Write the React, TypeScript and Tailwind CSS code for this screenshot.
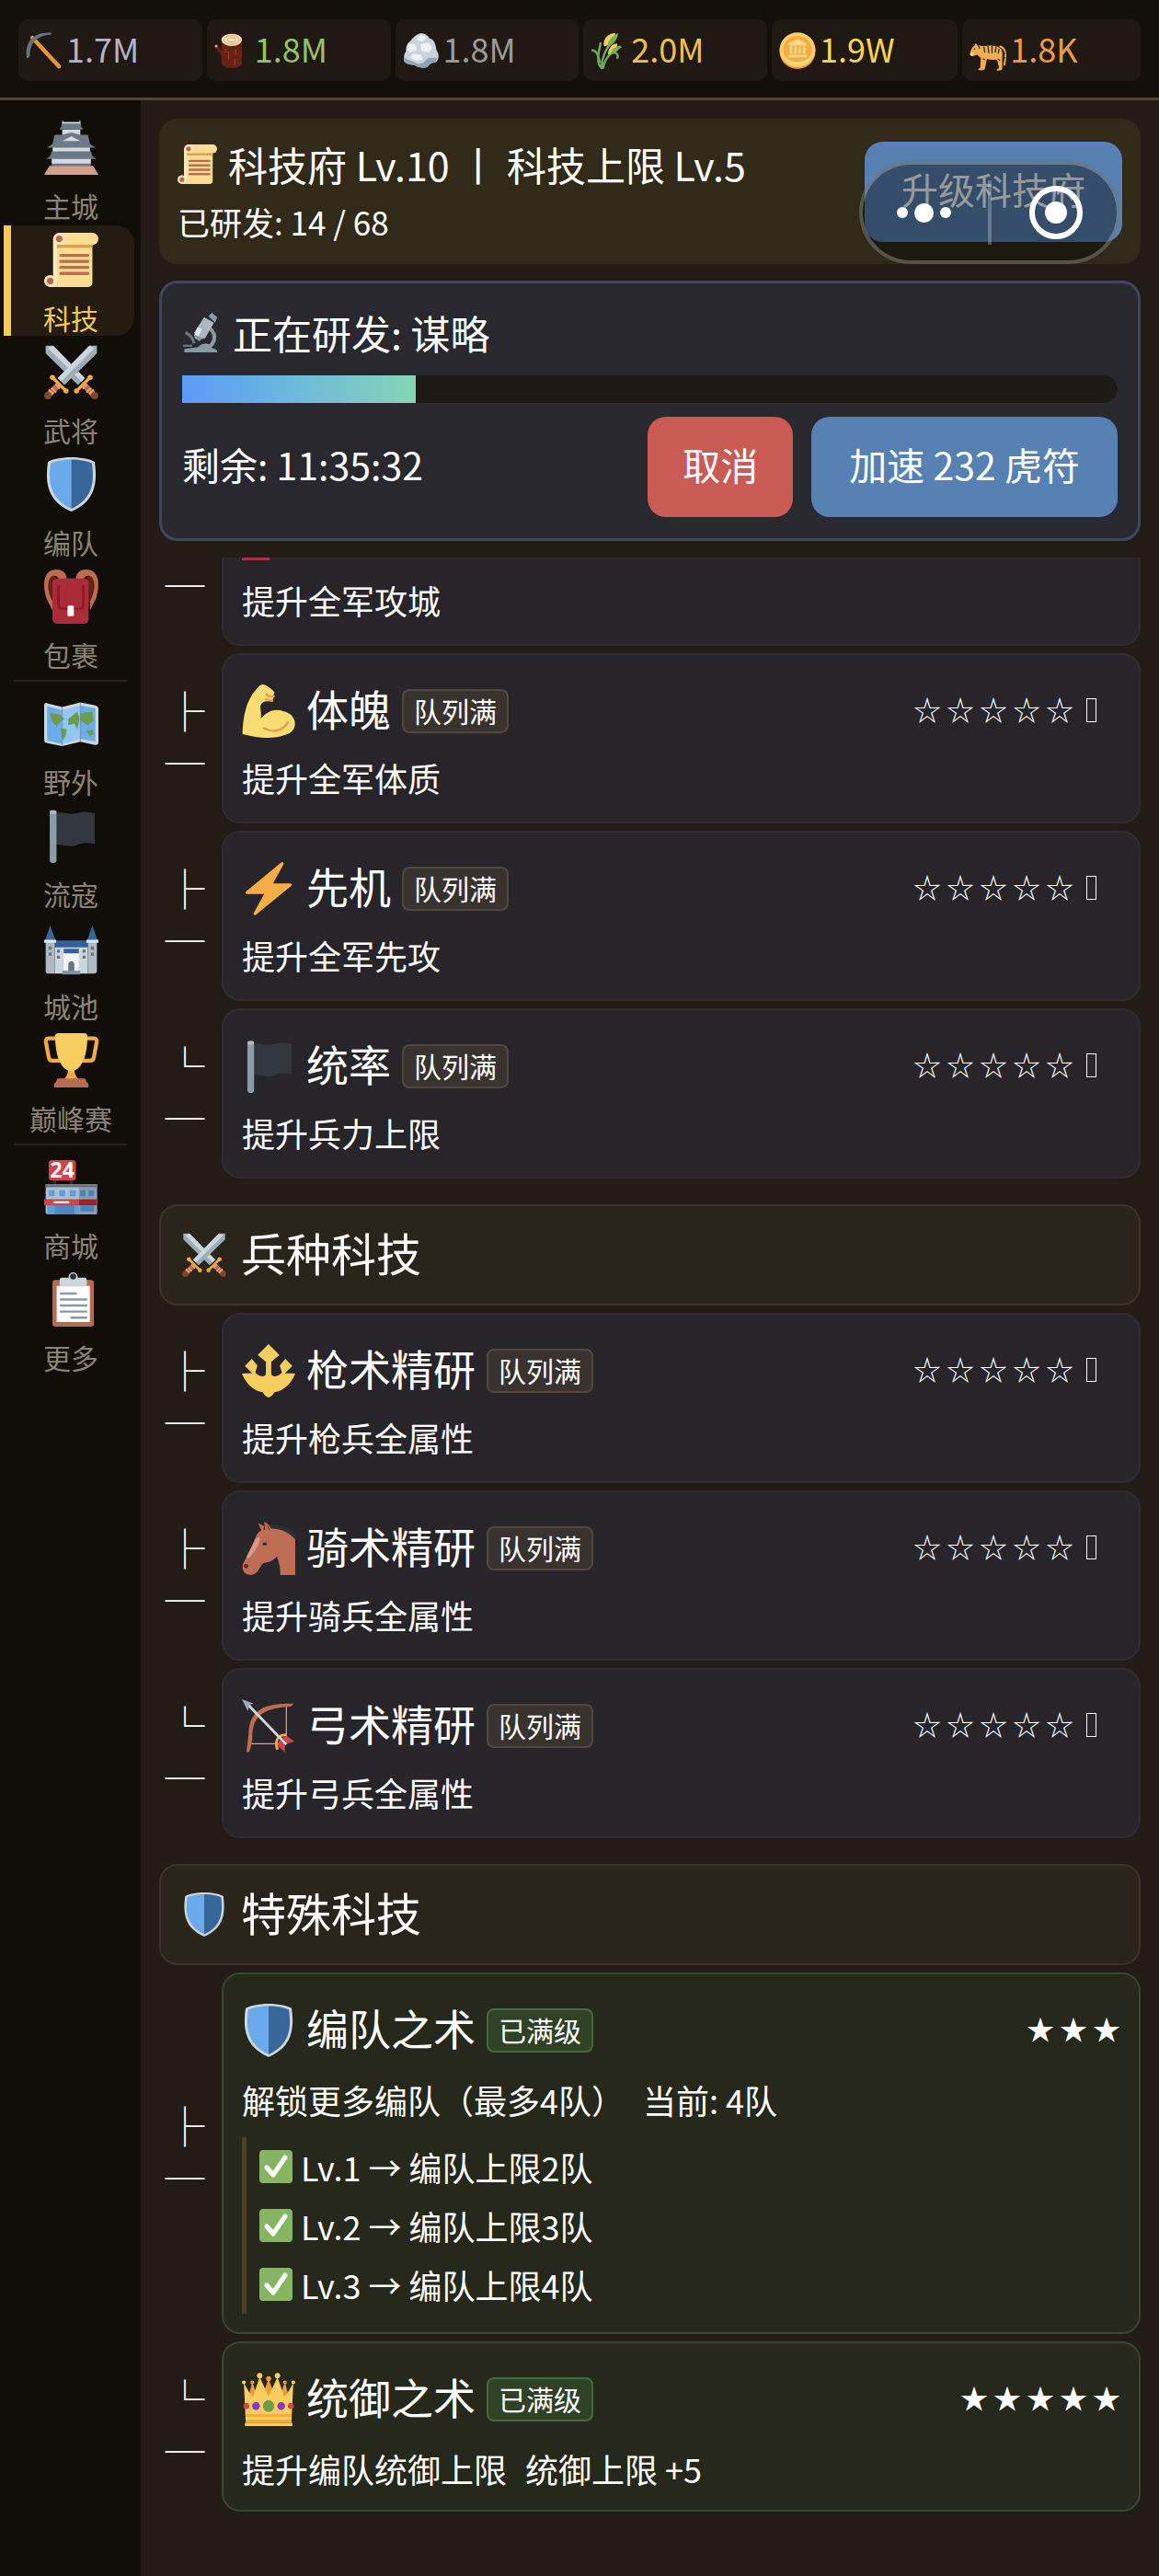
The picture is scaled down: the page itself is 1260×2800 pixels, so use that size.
import React from "react";
import clsx from "clsx";

interface IconProps {
  className?: string;
}

// ---------- icons ----------

function Svg({ className, children }: IconProps & { children: React.ReactNode }) {
  return (
    <svg viewBox="0 0 36 36" className={clsx("shrink-0 overflow-visible", className)} aria-hidden="true">
      {children}
    </svg>
  );
}

const PickaxeIcon = ({ className }: IconProps) => (
  <Svg className={className}>
    <path d="M6.5 5.500 32.500 33.500" stroke="#e8963a" strokeWidth="4" strokeLinecap="round" />
    <path d="M1 25C-1 12 5 0 24 .5c1 .2 1.500 1 1 1.800C14 3 4 8 4 23c0 1.500-2.500 3-3 2z" fill="#66757f" />
  </Svg>
);

const WoodIcon = ({ className }: IconProps) => (
  <Svg className={className}>
    <path d="M9 23 2 14" stroke="#662113" strokeWidth="3" strokeLinecap="round" />
    <circle cx="1.800" cy="13.500" r="1.400" fill="#e39f89" />
    <path d="M7 7h20v23c0 7-20 7-20 0z" fill="#662113" />
    <ellipse cx="17" cy="7.500" rx="10" ry="6" fill="#ffe8b6" />
    <ellipse cx="17" cy="7.500" rx="7.500" ry="4.200" fill="none" stroke="#c58b6a" strokeWidth=".8" />
    <ellipse cx="17" cy="7.500" rx="4" ry="2" fill="none" stroke="#c58b6a" strokeWidth=".8" />
    <path d="M14 19v8M21 17v5M20 26v6M11 16v4" stroke="#8f4632" strokeWidth="1" />
  </Svg>
);

const RockIcon = ({ className }: IconProps) => (
  <Svg className={className}>
    <path d="M13 3c5-4 11-1 13 3 5 1 6 6 7 12 3 4 2 8 0 11-4 0-6 1-9 5-5 2-10 0-13-2-4 0-9-1-10-4 0-4 0-7 2-9 0-5 1-8 4-10 2-2 3-4 6-6z" fill="#c9d3dc" />
    <path d="M14 4c4-2 8-1 9 2l-4 3-6-1zM6 11l6 1 2 5-7 3-3-3zM17 12l8-2 4 5-4 5-7-2zM10 21l8 1 1 5-7 1-5-3z" fill="#edf2f6" />
    <path d="M1 24c3 4 7 3 10 5 3 3 6 2 9 1l5-5 8 0c0 2 0 3-1 5-4 0-5 1-8 4-5 2-10 0-13-2-4 0-9-1-10-4zM15 18l3 2M26 8l3 4M22 21l4 1" fill="#91a2b3" />
  </Svg>
);

const GrainIcon = ({ className }: IconProps) => (
  <Svg className={className}>
    <path d="M11 36C10 25 17 12 26 3M12 36c2-12 9-17 18-22M11 35C5 30 8 19 10 10M9 30C8 22 5 17 1 18M20 20c5-1 8 2 6 6" stroke="#6fa85c" strokeWidth="2.200" fill="none" />
    <path d="M13 13C12 6 18 1 24 1c2 4-4 11-10 13z" fill="#f4cb64" />
    <path d="M16 15C17 8 22 3 27 1c-1 7-5 12-11 14z" fill="#77b255" />
    <path d="M17 22c0-7 5-11 9-11 1 4-3 9-9 11z" fill="#f4cb64" />
    <path d="M19 22c1-5 5-8 10-9-1 5-5 8-10 9z" fill="#77b255" />
  </Svg>
);

const CoinIcon = ({ className }: IconProps) => (
  <Svg className={className}>
    <ellipse cx="18" cy="19" rx="17.500" ry="17" fill="#e2922e" />
    <ellipse cx="18" cy="17.300" rx="17.500" ry="17" fill="#ffcf66" />
    <ellipse cx="18" cy="17.500" rx="14" ry="14" fill="#f4ab45" />
    <path d="M4.500 21c3 11 24 11 27 0-1 14-26 14-27 0z" fill="#ffe090" />
    <path d="M18 6.500 27 11v2H9v-2zM10.500 14h2.500v7h-2.500zM15 14h2.200v7H15zM19 14h2.200v7H19zM23.200 14h2.500v7h-2.500zM9 22h18v2.500H9z" fill="#ffd983" />
  </Svg>
);

const TigerIcon = ({ className }: IconProps) => (
  <Svg className={className}>
    <path d="M30 14c6 2 6 8 4 18" stroke="#f0a94a" strokeWidth="1.800" fill="none" strokeLinecap="round" />
    <path d="M1 19c1-3 2-5 4-6l1-2 2 1.500c2 0 3 1 5 1 8-1 14-1 18 3 2 4 1 7 1 10v9c0 1.500-1 2-5 2-1-1 0-2 2-2.500l-2-8c-2 0-6 0-10-1l-2 10c-1 1.500-4 1.500-6 1-1-1 0-2 1.500-2L11 25c-2-1-3-3-4-3-2 1-5 2-6 1-1-1-.5-2.500 0-4z" fill="#f4ae50" />
    <path d="m14 14 1 6M18 13.500l1 7M22 13.500l0 7M26 14l-1 6M29 16l-1 5M8 12l2 4M33 20l2 1M33 25h2M28 26l2 2M13 26l2 1" stroke="#292f33" strokeWidth="1.200" />
    <circle cx="5" cy="16.500" r=".8" fill="#292f33" />
    <path d="M1 20.500h2.500v2H1z" fill="#f5ddbf" />
  </Svg>
);

const PagodaIcon = ({ className }: IconProps) => (
  <Svg className={className}>
    <path d="M12 6h12v5H12zM5.600 16h24.800v5H5.600zM5 24h26v5H5z" fill="#d5dade" />
    <path d="M11.800 0h1v1h10.400V0h1l.3 4 1.500 2H10l1.500-2zM7 9.500h5l6-1.500 6 1.500h5l1.500 6 3.500 2.500H2l3.500-2.500zM5 20.500h26l1 3 2.500 2H1.500l2.500-2zM5 28.500h26V30H5z" fill="#6b7a86" />
    <path d="m12 13.500 6-3 6 3z" fill="#d5dade" />
    <path d="M12 1h12v1H12z" fill="#d5dade" />
    <path d="M3.500 30h29L36 36H0z" fill="#d3a188" />
  </Svg>
);

const ScrollIcon = ({ className }: IconProps) => (
  <Svg className={className}>
    <path d="M6 4h26v29c0 2-1 3-3 3H4l2-4z" fill="#fadc92" />
    <path d="M6 4h2.500v30L6 35z" fill="#ffebc2" />
    <path d="M8.500 6H32v4H8.500z" fill="#dba247" />
    <rect x="8" y="0" width="28" height="8" rx="4" fill="#fadc92" />
    <circle cx="10" cy="4" r="4" fill="#ffe9bd" />
    <circle cx="10" cy="4" r="2.200" fill="#b9694d" />
    <circle cx="4" cy="32" r="4" fill="#ffe9bd" />
    <circle cx="4" cy="32" r="2.200" fill="#b9694d" />
    <path d="M11 15h18M11 19h18M11 23h18M11 27h18" stroke="#b86e50" strokeWidth="2" strokeLinecap="round" />
  </Svg>
);

const SwordHalf = () => (
  <>
    <path d="M1 .5h5L27 22l-4.500 4.500L1 5.500z" fill="#9fadb8" />
    <path d="M6 .5 27 22l-2.200 2.200L2.500 2z" fill="#ccd6dd" />
    <path d="m26 26 7 7" stroke="#bf6952" strokeWidth="4" />
    <path d="m28.500 26-3 3M31 28.500l-3 3" stroke="#e09c86" strokeWidth="1.200" />
    <circle cx="33.500" cy="33.500" r="2.400" fill="#854535" />
    <path d="m30.500 21.500-9 9" stroke="#f4ab3b" strokeWidth="2" />
    <path d="m33 29.500-3 3" stroke="#f4ab3b" strokeWidth="1.200" />
    <circle cx="30.500" cy="21.500" r="1.700" fill="#f4ab3b" />
    <circle cx="21.500" cy="30.500" r="1.700" fill="#f4ab3b" />
  </>
);

const SwordsIcon = ({ className }: IconProps) => (
  <Svg className={className}>
    <SwordHalf />
    <g transform="matrix(-1 0 0 1 36 0)">
      <SwordHalf />
    </g>
  </Svg>
);

const ShieldIcon = ({ className }: IconProps) => (
  <Svg className={className}>
    <path d="M18 0C11 0 5 1.500 2.500 3 .5 17 2 29 18 36 34 29 35.500 17 33.500 3 31 1.500 25 0 18 0z" fill="#ccd6dd" />
    <path d="M18 1.500C12 1.500 7 2.500 4.300 4 2.500 17 4 27.500 18 34.200z" fill="#6baaea" />
    <path d="M18 1.500c6 0 11 1 13.700 2.500C33.500 17 32 27.500 18 34.200z" fill="#376699" />
  </Svg>
);

const BackpackIcon = ({ className }: IconProps) => (
  <Svg className={className}>
    <path d="M6 3C2 5 2 10 3 15l5 12V6z" fill="#662113" />
    <path d="M30 3c4 2 4 7 3 12l-5 12V6z" fill="#662113" />
    <path d="M1.500 19C-1.500 9 0 0 8 0c4 0 7 2 7 7h-5c-1-4-6-4-7 1-.7 3-.5 7 2.500 13v6zM34.500 19C37.500 9 36 0 28 0c-4 0-7 2-7 7h5c1-4 6-4 7 1 .7 3 .5 7-2.500 13v6z" fill="#bd6c52" />
    <rect x="5.500" y="6" width="24" height="30" rx="3" fill="#ab2c39" />
    <path d="M9.500 10.500v13c0 1.500 1 2.500 2.500 2.500h11.500c1.500 0 2.500-1 2.500-2.500v-13" stroke="#911a28" strokeWidth="1.800" fill="none" />
    <rect x="15.500" y="24" width="4.200" height="7" rx="1" fill="#fff" />
  </Svg>
);

const MapIcon = ({ className }: IconProps) => (
  <Svg className={className}>
    <path d="M2 4.500 12 7l12-3 10 2c1.500.5 2 1 2 2.500V30c0 2-1 2.500-3 2l-9-2-12 3L2 31c-1.500-.3-2-1-2-2.500V6c0-1.500.8-2 2-1.500z" fill="#ccd6dd" />
    <path d="M2 6.500 12 9v22.500L2 29.300zM24 6l10 2v22l-10-2z" fill="#6aade9" />
    <path d="m12 9 12-3v22l-12 3.500z" fill="#92c7f5" />
    <path d="M3.500 11l7 1 3 3-3 2-2 3-3-3zM11 21l4 1-1 5-2 2zM16 15l6-5 1.500 5-1.500 7-2-4-4 1zM24 11l8-1 1 6-4 3-5-3zM28 23l4-1 1 3-3 1z" fill="#6a9c4b" />
    <path d="M12 7v26M24 4v26" stroke="#758594" strokeWidth=".5" />
  </Svg>
);

const FlagIcon = ({ className }: IconProps) => (
  <Svg className={className}>
    <path d="M6.500 3c8-1.500 9 1.500 15 0 4-1.300 8-1 12 0v20.500c-6-1.500-9-.5-13 1-5 1-8-.5-14-1z" fill="#31373d" />
    <rect x="3.700" y="1" width="4.500" height="35" rx="2" fill="#8c9baa" />
    <rect x="3.700" y="1" width="4.500" height="2.500" rx="1.200" fill="#aab8c2" />
  </Svg>
);

const CastleIcon = ({ className }: IconProps) => (
  <Svg className={className}>
    <path d="M7 13h22v5H7z" fill="#32619a" />
    <path d="M7 17.500h22V35H7z" fill="#ccd6dd" />
    <path d="M1 13h6v22H3c-1.500 0-2-.5-2-2zM29 13h6v20c0 1.500-.5 2-2 2h-4z" fill="#aeb9c2" />
    <path d="M4 3 7.500 13H.5zM32 3l3.500 10h-7z" fill="#376699" />
    <path d="M0 12.500h8v2H0zM28 12.500h8v2h-8z" fill="#dfe6eb" />
    <path d="M13 20h10v13H13z" fill="#f1f4f7" />
    <path d="M13 18.500h10v3H13z" fill="#32619a" />
    <path d="M16 34v-5c0-3 4-3 4 0v5z" fill="#66757f" />
    <path d="M12 33h12v2.500H12z" fill="#8494a5" />
    <path d="M3 17h2v2H3zM3 21h2v2H3zM8.500 19h2v2h-2zM8.500 23h2v2h-2zM25.500 19h2v2h-2zM25.500 23h2v2h-2zM31 17h2v2h-2zM31 21h2v2h-2z" fill="#66757f" />
  </Svg>
);

const TrophyIcon = ({ className }: IconProps) => (
  <Svg className={className}>
    <path d="M8 3.500H3c-1.500 0-2 1-1.800 2.500L3 16c.3 1.800 1 2.300 2.500 2.300H11M28 3.500h5c1.500 0 2 1 1.800 2.500L33 16c-.3 1.800-1 2.300-2.500 2.300H25" fill="none" stroke="#f2ab42" strokeWidth="2.600" />
    <path d="M16 22h4c0 5 1 7 3 8.500H13c2-1.500 3-3.500 3-8.500z" fill="#f2ab42" />
    <path d="M7.300 2c0-1.500 1-2 2-2h17.400c1 0 2 .5 2 2 0 12-3 20-8 22.500-1.500 1-3.800 1-5.400 0-5-2.500-8-10.500-8-22.500z" fill="#f8ce60" />
    <path d="M9.500 30h17c1 0 1.500 1 1.500 2.500 1 0 1.500 1 1.500 3.500h-23c0-2.500.5-3.500 1.500-3.500 0-1.500.5-2.500 1.500-2.500z" fill="#b96c52" />
  </Svg>
);

const StoreIcon = ({ className }: IconProps) => (
  <Svg className={className}>
    <path d="M6 13h2v4H6zM17 13h2v4h-2z" fill="#292f33" />
    <rect x="3" y="0" width="18" height="13.500" rx="2" fill="#d0424c" />
    <text x="12" y="11.800" textAnchor="middle" className="fill-white font-['Open_Sans',sans-serif] text-[14px] font-bold">24</text>
    <path d="M1 16h34v18.500c0 1-.5 1.500-1.500 1.500h-31C1.500 36 1 35.500 1 34.500z" fill="#aebfce" />
    <path d="M23 16h12v20H23z" fill="#8b9dac" />
    <path d="M1 16h34v2H1z" fill="#66757f" />
    <path d="M3 20h4v4H3zM10 20h4v4h-4zM17 20h4v4h-4zM2 30h21v6H2z" fill="#58a0e0" />
    <path d="M24 20h3.500v4H24zM29.500 20H33v4h-3.500zM24 30h9v4h-9z" fill="#4684bd" />
    <path d="M7 30h13v6H7z" fill="#4b87c0" />
    <path d="M0 26h23v4H0z" fill="#d0424c" />
    <path d="M23 26h12v4H23z" fill="#9a2130" />
    <path d="M7 28h9" stroke="#fff" strokeWidth="1.500" strokeLinecap="round" />
  </Svg>
);

const ClipboardIcon = ({ className }: IconProps) => (
  <Svg className={className}>
    <rect x="5.500" y="5" width="27.500" height="31" rx="2" fill="#b96b52" />
    <path d="M8.300 9h22v24h-22z" fill="#fff" />
    <circle cx="19.200" cy="3" r="3" fill="#ccd6dd" />
    <rect x="10.300" y="3.500" width="18" height="6" rx="1.500" fill="#ccd6dd" />
    <circle cx="19.200" cy="2.800" r="2" fill="#292f33" />
    <path d="M11 14h10M11 18h17M11 22h17M11 26h17M18 30h10" stroke="#8998a8" strokeWidth="1.500" strokeLinecap="round" />
  </Svg>
);

const MicroscopeIcon = ({ className }: IconProps) => (
  <Svg className={className}>
    <path d="M3 18c5 2 7 6 8 10" stroke="#66757f" strokeWidth="2.500" fill="none" />
    <path d="M25 14c7 6 5 14-2 18" stroke="#8899a6" strokeWidth="3.500" fill="none" />
    <path d="M1 29h8v2H1z" fill="#66757f" />
    <path d="M2 33c3-1 10-1 13-2 1-3 8-4 10-2 1 3 3 3 5 4 1 0 2 1 2 3H2z" fill="#8899a6" />
    <path d="m11 18 9-14 9 5-8 14-4 1-5-2z" fill="#aab8c2" />
    <path d="m14 13 4 2-4 8-3-2z" fill="#e1e8ed" />
    <path d="m12 20 6 3-2 3-5-3z" fill="#8899a6" />
    <path d="m24 3 3-3 5 4-2 5z" fill="#8c9baa" />
  </Svg>
);

const MuscleIcon = ({ className }: IconProps) => (
  <Svg className={className}>
    <path d="M12 .7c1.500-1 3-.8 4.500 0 2 1.200 4 2.500 5.500 4.500l-.7 2c.5 1.500-.3 2.500-.8 4l-5 .3c-2.500 1-3.500 2.500-3 5 .2 2 .7 4 .3 6.500 4-5 10-7 15-5 5 1 8 4.500 8 8.500s-3 6.500-6.500 7.500C21 37 12 36.500.8 33.500c-.5-.2-.5-1-.4-2C1 23 2 10 12 .7z" fill="#fadc74" />
    <path d="M15 29.500c6 3.500 13 1.500 16-4M16.500 6.500c1.500 1.800 3 2 5 1.500M16 10l4.500 1" stroke="#e0a04f" strokeWidth="1.500" fill="none" strokeLinecap="round" />
  </Svg>
);

const BoltIcon = ({ className }: IconProps) => (
  <Svg className={className}>
    <path d="M26.500.3c1-.7 2 .3 1.500 1.400L21 14.500h11.500c1.300 0 1.500 1 .7 1.700L9.500 35.600c-1 .8-2-.2-1.500-1.300L15 21.500H3.500c-1.300 0-1.500-1-.7-1.700z" fill="#f4ae45" />
  </Svg>
);

const TridentIcon = ({ className }: IconProps) => (
  <Svg className={className}>
    <path d="m18 0 7.300 7.300-5.500 4.700v7.500c0 1.500 1 2.200 2.200 2.200 1.500 0 3-.5 5-2.500l-1.500-4.700 3.800-4.500 4.700 4.700-5 5c2.500 0 4-.2 7 .3-3 7-8 11.500-14 12.500-1 1.500-2 3-4 3.500-2-.5-3-2-4-3.500-6-1-11-5.500-14-12.500 3-.5 4.500-.3 7-.3l-5-5L6.700 10l3.800 4.500L9 19.200c2 2 3.500 2.500 5 2.500 1.200 0 2.200-.7 2.200-2.200V12l-5.500-4.700z" fill="#f6cd5f" />
  </Svg>
);

const HorseIcon = ({ className }: IconProps) => (
  <Svg className={className}>
    <path d="M13 4C21 0 30 2 36 8v6L17 8z" fill="#292f33" />
    <path d="M12 6.500C19 3 29 4 36 12v24H26c0-5-1-9-2.500-12.500-2 3-6 4-9 4.500C12 30 11 36 6 36c-5 0-6.500-4-5-8l7-14c1-3 2-6 4-7.500z" fill="#bd6e55" />
    <path d="m11 1 4 2-1 5zM15 0c3 1.500 5 4 5.500 7.500L16 7z" fill="#bd6e55" />
    <path d="M16.500 2c1.500 1 2.500 3 2.500 4.500z" fill="#6b2517" />
    <path d="m9 12 3-2c1 4-4 12-8 15l-1-1z" fill="#d99a80" />
    <ellipse cx="15.500" cy="15" rx="1.400" ry="1.100" fill="#292f33" />
    <circle cx="2.800" cy="30" r="1.500" fill="#6b2517" />
  </Svg>
);

const BowIcon = ({ className }: IconProps) => (
  <Svg className={className}>
    <path d="M30 3v27H4" stroke="#d99e80" strokeWidth=".8" fill="none" />
    <path d="M35 3C20 3 4.500 4 4.500 24l-1.500 11.500 2 0c1-3 2-6 2-11C7.500 10 16 6 33 5z" fill="#bd6c50" />
    <path d="M24 34c-2-6 0-10 6-10" stroke="#f4ab3b" strokeWidth="1.800" fill="none" />
    <path d="M4 3.500 30 30.500" stroke="#ccd6dd" strokeWidth="1.800" />
    <path d="m0 0 8 3-3 .8L4 8z" fill="#9aa9b5" />
    <path d="m27 26 3-1.500 5.500 4-5 1.500zM25.500 27.500 24 31l5 5v-5z" fill="#d0424c" />
  </Svg>
);

const CrownIcon = ({ className }: IconProps) => (
  <Svg className={className}>
    <path d="m7 6 4 12H4zM18 4l5 14H13zM29 6l3 12h-7z" fill="#eb9a3c" />
    <path d="m1.300 7 4.700 8 1.500 1L12 3l6 13 6-13 4.500 13 1.500-1L34.700 7 33.500 32h-31z" fill="#f8ce60" />
    <path d="M2.500 28h31v2h-31zM2.500 32h31v2h-31z" fill="#f4ab3b" />
    <path d="M2.500 30h31v2h-31zM2 34h32v2H2z" fill="#f8ce60" />
    <circle cx="12" cy="2" r="1.800" fill="#f8ce60" />
    <circle cx="24" cy="2" r="1.800" fill="#f8ce60" />
    <circle cx="1.300" cy="6.500" r="1.300" fill="#f8ce60" />
    <circle cx="34.700" cy="6.500" r="1.300" fill="#f8ce60" />
    <circle cx="7" cy="6.500" r="1.300" fill="#eb9a3c" />
    <circle cx="29" cy="6.500" r="1.300" fill="#eb9a3c" />
    <circle cx="18" cy="4" r="1.700" fill="#eb9a3c" />
    <ellipse cx="18" cy="22.500" rx="3.800" ry="4" fill="#6f9c48" />
    <ellipse cx="9.500" cy="22.500" rx="2.600" ry="2.600" fill="#8b35d0" />
    <ellipse cx="26.500" cy="22.500" rx="2.600" ry="2.600" fill="#8b35d0" />
    <circle cx="3" cy="22.500" r="2" fill="#d0424c" />
    <circle cx="33" cy="22.500" r="2" fill="#d0424c" />
  </Svg>
);

const BrickIcon = ({ className }: IconProps) => (
  <Svg className={className}>
    <path d="M0 4h19v32H0z" fill="#a5333f" />
    <path d="M0 33h19v1H0z" fill="#7e1c28" />
  </Svg>
);

const CheckIcon = ({ className }: IconProps) => (
  <Svg className={className}>
    <rect width="36" height="36" rx="4" fill="#85b463" />
    <path d="m8 19 7 8L28 8" stroke="#fff" strokeWidth="5" fill="none" strokeLinecap="round" strokeLinejoin="round" />
  </Svg>
);

// ---------- data ----------

type IconType = (props: IconProps) => React.ReactElement;

const resources: { name: string; value: string; Icon: IconType; color: string }[] = [
  { name: "iron", value: "1.7M", Icon: PickaxeIcon, color: "text-[#b5b2c8]" },
  { name: "wood", value: "1.8M", Icon: WoodIcon, color: "text-[#98c164]" },
  { name: "stone", value: "1.8M", Icon: RockIcon, color: "text-[#9c9a98]" },
  { name: "food", value: "2.0M", Icon: GrainIcon, color: "text-[#f0c04e]" },
  { name: "coin", value: "1.9W", Icon: CoinIcon, color: "text-[#f8d850]" },
  { name: "tiger", value: "1.8K", Icon: TigerIcon, color: "text-[#ee9c42]" },
];

const navGroups: { label: string; Icon: IconType; active?: boolean }[][] = [
  [
    { label: "主城", Icon: PagodaIcon },
    { label: "科技", Icon: ScrollIcon, active: true },
    { label: "武将", Icon: SwordsIcon },
    { label: "编队", Icon: ShieldIcon },
    { label: "包裹", Icon: BackpackIcon },
  ],
  [
    { label: "野外", Icon: MapIcon },
    { label: "流寇", Icon: FlagIcon },
    { label: "城池", Icon: CastleIcon },
    { label: "巅峰赛", Icon: TrophyIcon },
  ],
  [
    { label: "商城", Icon: StoreIcon },
    { label: "更多", Icon: ClipboardIcon },
  ],
];

interface Tech {
  name?: string;
  Icon: IconType;
  desc: string;
  current?: string;
  stars?: number;
  maxed?: boolean;
  levels?: string[];
}

const armyTechs: Tech[] = [
  { Icon: BrickIcon, desc: "提升全军攻城" },
  { name: "体魄", Icon: MuscleIcon, desc: "提升全军体质" },
  { name: "先机", Icon: BoltIcon, desc: "提升全军先攻" },
  { name: "统率", Icon: FlagIcon, desc: "提升兵力上限" },
];

const troopTechs: Tech[] = [
  { name: "枪术精研", Icon: TridentIcon, desc: "提升枪兵全属性" },
  { name: "骑术精研", Icon: HorseIcon, desc: "提升骑兵全属性" },
  { name: "弓术精研", Icon: BowIcon, desc: "提升弓兵全属性" },
];

const specialTechs: Tech[] = [
  {
    name: "编队之术",
    Icon: ShieldIcon,
    desc: "解锁更多编队（最多4队）",
    current: "当前: 4队",
    stars: 3,
    maxed: true,
    levels: ["Lv.1 → 编队上限2队", "Lv.2 → 编队上限3队", "Lv.3 → 编队上限4队"],
  },
  {
    name: "统御之术",
    Icon: CrownIcon,
    desc: "提升编队统御上限",
    current: "统御上限 +5",
    stars: 5,
    maxed: true,
  },
];

// ---------- components ----------

function ResourceBar() {
  return (
    <header className="flex gap-[5px] px-5 pt-[21px] pb-[18px] bg-[#13100b] border-b-[3px] border-[#54462d]">
      {resources.map(({ name, value, Icon, color }) => (
        <div key={name} className="flex flex-auto items-center gap-1 h-[67px] px-2 rounded-[10px] bg-[#201812]">
          <Icon className="size-10" />
          <span className={clsx("pb-[6px] text-[36px] leading-none", color)}>{value}</span>
        </div>
      ))}
    </header>
  );
}

function Sidebar() {
  return (
    <nav className="w-[153px] shrink-0 px-1 pt-[14px] bg-[#110e0a]">
      {navGroups.map((group, i) => (
        <div key={i}>
          {i > 0 && <hr className="mx-[11px] my-2 border-0 h-[2px] bg-[#282116]" />}
          <div className="flex flex-col gap-[2px]">
            {group.map(({ label, Icon, active }) => (
              <button
                key={label}
                type="button"
                className={clsx(
                  "flex flex-col items-center h-[120px] w-[142px] pt-2 rounded-r-[20px] border-l-8 pr-1",
                  active ? "border-[#f4cb58] bg-[#241c10] text-[#f4cb58]" : "border-transparent text-[#8b8375]"
                )}
              >
                <Icon className="size-[59px]" />
                <span className="mt-4 text-[30px] leading-[34px]">{label}</span>
              </button>
            ))}
          </div>
        </div>
      ))}
    </nav>
  );
}

function TitlePanel() {
  return (
    <section className="relative flex items-start justify-between p-5 rounded-[20px] bg-[#322a18]">
      <div>
        <h1 className="flex items-center gap-3 text-[43px] leading-[58px]">
          <ScrollIcon className="size-[43px]" />
          科技府 Lv.10 丨 科技上限 Lv.5
        </h1>
        <p className="mt-2 text-[35px] leading-[52px]">已研发: 14 / 68</p>
      </div>
      <button type="button" className="mt-[5px] h-[109px] px-10 pb-2 rounded-[20px] bg-[#5681b2] text-[40px] leading-none">
        升级科技府
      </button>

      {/* mini-program capsule floating over the page */}
      <div className="absolute right-[22px] top-[46px] flex items-center h-[112px] w-[284px] rounded-full border-4 border-white/25 bg-black/40">
        <button type="button" aria-label="menu" className="flex flex-1 items-center justify-center gap-[7px] pr-1">
          <span className="size-3 rounded-full bg-white" />
          <span className="size-[21px] rounded-full bg-white" />
          <span className="size-3 rounded-full bg-white" />
        </button>
        <span className="w-1 h-[70px] bg-white/25" />
        <button type="button" aria-label="close" className="flex flex-1 items-center justify-center pl-1">
          <span className="flex items-center justify-center size-[58px] rounded-full border-[6px] border-white">
            <span className="size-6 rounded-full bg-white" />
          </span>
        </button>
      </div>
    </section>
  );
}

function ResearchCard() {
  return (
    <section className="mt-[18px] px-[22px] py-[23px] rounded-[20px] border-[3px] border-[#3a4663] bg-[#29282e]">
      <h2 className="flex items-center gap-3 text-[43px] leading-[60px]">
        <MicroscopeIcon className="size-[43px]" />
        正在研发: 谋略
      </h2>
      <div
        role="progressbar"
        aria-valuenow={25}
        className="mt-[17px] h-[30px] rounded-r-full bg-[#1d1a13]"
      >
        <div className="h-full w-1/4 bg-linear-to-r from-[#5a9bf8] to-[#84d6b5]" />
      </div>
      <div className="mt-[15px] flex items-center gap-5 text-[41px] leading-none">
        <span className="mr-auto pb-[6px]">剩余: 11:35:32</span>
        <button type="button" className="h-[109px] px-[38px] pb-[6px] rounded-[20px] bg-[#c95a54]">取消</button>
        <button type="button" className="h-[109px] px-[41px] pb-[6px] rounded-[20px] bg-[#5681b2]">加速 232 虎符</button>
      </div>
    </section>
  );
}

function SectionHeader({ title, Icon }: { title: string; Icon: IconType }) {
  return (
    <h2 className="flex items-center gap-4 mt-5 h-[110px] px-[23px] rounded-[20px] border-2 border-[#3d3324] bg-[#2a251b] text-[49px] leading-none">
      <Icon className="size-12" />
      <span className="pb-2">{title}</span>
    </h2>
  );
}

function Stars({ count }: { count?: number }) {
  const marks = count ? "★".repeat(count) : "☆☆☆☆☆";

  return (
    <span className="ml-auto flex items-center gap-[6px] pb-[6px] text-[30px] leading-none">
      {marks.split("").map((mark, i) => (
        <span key={i}>{mark}</span>
      ))}
      {!count && <span className="ml-2 mr-[26px] mt-1 h-[26px] w-[11px] border border-white" />}
    </span>
  );
}

function TechRow({ tech, last }: { tech: Tech; last: boolean }) {
  const { name, Icon, desc, current, stars, maxed, levels } = tech;

  return (
    <li className="flex items-center gap-3">
      <span className="w-14 shrink-0 pb-[6px] text-center text-[43px] leading-[57px] break-all">
        {last ? "└─" : "├─"}
      </span>
      <div
        className={clsx(
          "flex-1 px-5 pt-5 rounded-[20px] border-2",
          maxed ? "pb-5 border-[#35482b] bg-[#25281a]" : "pb-[23px] border-[#2e2c33] bg-[#27242a]"
        )}
      >
        <div className="flex items-center h-[82px]">
          <Icon className="size-[58px]" />
          {name && (
            <>
              <h3 className="ml-3 pb-2 text-[46px] leading-none">{name}</h3>
              <span
                className={clsx(
                  "ml-3 px-[11px] pb-[2px] rounded-[8px] border-2 text-[30px] leading-[42px]",
                  maxed ? "border-[#426a3a] bg-[#304226]" : "border-[#51473a] bg-[#393330]"
                )}
              >
                {maxed ? "已满级" : "队列满"}
              </span>
              <Stars count={stars} />
            </>
          )}
        </div>
        <p className={clsx("flex gap-5 text-[36px] leading-[50px]", maxed ? "mt-[9px]" : "mt-[6px]")}>
          <span>{desc}</span>
          {current && <span>{current}</span>}
        </p>
        {levels && (
          <ul className="mt-4 border-l-[5px] border-[#4a3f29] pl-[14px]">
            {levels.map((level) => (
              <li key={level} className="flex items-center gap-[9px] text-[36px] leading-[64px]">
                <CheckIcon className="size-9" />
                {level}
              </li>
            ))}
          </ul>
        )}
      </div>
    </li>
  );
}

function TechList({ techs, scrolled }: { techs: Tech[]; scrolled?: boolean }) {
  return (
    <ul className={clsx("flex flex-col gap-2", scrolled && "-mt-[89px]")}>
      {techs.map((tech, i) => (
        <TechRow key={tech.desc} tech={tech} last={i === techs.length - 1} />
      ))}
    </ul>
  );
}

export default function App() {
  return (
    <div className="flex flex-col min-h-screen bg-[#231b15] text-white font-['Noto_Sans_CJK_SC',sans-serif]">
      <ResourceBar />
      <div className="flex flex-1">
        <Sidebar />
        <main className="flex-1 p-5">
          <TitlePanel />
          <ResearchCard />
          <div className="mt-[18px] flex flex-col gap-2 overflow-hidden">
            <TechList techs={armyTechs} scrolled />
            <SectionHeader title="兵种科技" Icon={SwordsIcon} />
            <TechList techs={troopTechs} />
            <SectionHeader title="特殊科技" Icon={ShieldIcon} />
            <TechList techs={specialTechs} />
          </div>
        </main>
      </div>
    </div>
  );
}
